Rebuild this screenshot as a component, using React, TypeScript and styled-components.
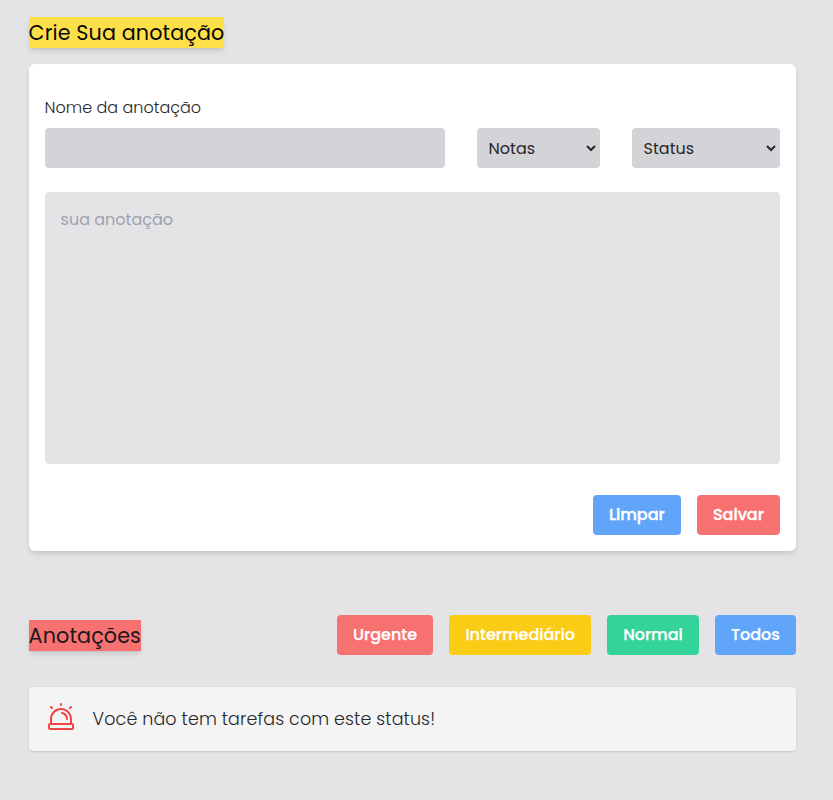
import React from "react";
import styled, { createGlobalStyle } from "styled-components";
import { PiSiren } from "react-icons/pi";

const GlobalStyle = createGlobalStyle`
  *, *::before, *::after { box-sizing: border-box; }
  body {
    margin: 0;
    background: #e4e4e6;
    color: #27272a;
    font-family: Poppins, Inter, "Liberation Sans", sans-serif;
    font-size: 16px;
    line-height: 24px;
  }
  button, input, select, textarea { font: inherit; color: inherit; border: 0; margin: 0; }
`;

const Page = styled.main`
  min-height: 800px;
  padding: 17px 36.8px 49px 28.6px;
`;

const Title = styled.h1<{ $color: string; $ink: string }>`
  width: fit-content;
  height: 31px;
  margin: 0;
  background: ${(p) => p.$color};
  color: ${(p) => p.$ink};
  font-size: 20.7px;
  font-weight: 400;
  line-height: 32px;
  letter-spacing: 0.12px;
  white-space: nowrap;
  box-shadow: 0 4px 6px -1px rgba(0, 0, 0, 0.1), 0 2px 4px -2px rgba(0, 0, 0, 0.1);
`;

const Card = styled.form`
  display: flex;
  flex-direction: column;
  height: 487px;
  margin-top: 16px;
  padding: 32px 16px 16px;
  border-radius: 6px;
  background: #fff;
  box-shadow: 0 4px 6px -1px rgba(0, 0, 0, 0.1), 0 2px 4px -2px rgba(0, 0, 0, 0.1);
`;

const Fields = styled.div`
  display: grid;
  grid-template-columns: 400px 123px 1fr;
  column-gap: 32px;
  align-items: end;
`;

const Field = styled.label`
  display: grid;
  row-gap: 8px;
  font-weight: 300;
`;

const TextInput = styled.input`
  width: 100%;
  height: 40px;
  padding: 8px 12px;
  border-radius: 4px;
  background: #d4d4d8;
`;

const Select = styled.select`
  width: 100%;
  height: 40px;
  padding: 0 8px;
  border-right: 1px solid transparent;
  border-radius: 4px;
  background: #d4d4d8;
  color: #27272a;
`;

const NoteArea = styled.textarea`
  height: 272px;
  margin-top: 24px;
  padding: 16px;
  border-radius: 4px;
  background: #e4e4e6;
  resize: none;
  &::placeholder { color: #9ca3af; opacity: 1; }
`;

const Actions = styled.div`
  display: flex;
  justify-content: flex-end;
  gap: 16px;
  margin-top: 31px;
`;

const Button = styled.button<{ $color: string; $stroke: number }>`
  height: 40px;
  padding: 0 16.35px 0 15.9px;
  border-radius: 4px;
  background: ${(p) => p.$color};
  color: #fff;
  font-weight: 500;
  -webkit-text-stroke: ${(p) => p.$stroke}px #fff;
  white-space: nowrap;
`;

const ListHeader = styled.header`
  display: flex;
  align-items: center;
  justify-content: space-between;
  margin-top: 64px;
`;

const Filters = styled.nav`
  display: flex;
  gap: 16px;
`;

const EmptyNotice = styled.section`
  display: flex;
  align-items: center;
  gap: 16px;
  height: 64px;
  margin-top: 32px;
  padding: 0 16px;
  border-radius: 4px;
  background: #f4f4f4;
  box-shadow: 0 1px 3px rgba(0, 0, 0, 0.1), 0 1px 2px -1px rgba(0, 0, 0, 0.1);
  font-size: 17.5px;
  letter-spacing: 0.1px;
  font-weight: 300;
  svg { color: #ef4444; flex: none; }
`;

const filters = [
  { label: "Urgente", color: "#f87171" },
  { label: "Intermediário", color: "#facc15" },
  { label: "Normal", color: "#34d399" },
  { label: "Todos", color: "#60a5fa" },
];

export default function App() {
  return (
    <>
      <GlobalStyle />
      <Page>
        <Title $color="#fde047" $ink="#09090b">Crie Sua anotação</Title>
        <Card onSubmit={(e) => e.preventDefault()}>
          <Fields>
            <Field>Nome da anotação<TextInput /></Field>
            <Select><option>Notas</option></Select>
            <Select><option>Status</option></Select>
          </Fields>
          <NoteArea placeholder="sua anotação" />
          <Actions>
            <Button type="button" $color="#60a5fa" $stroke={0.4}>Limpar</Button>
            <Button type="submit" $color="#f87171" $stroke={0.4}>Salvar</Button>
          </Actions>
        </Card>
        <ListHeader>
          <Title as="h2" $color="#f87171" $ink="#18181b">Anotações</Title>
          <Filters>
            {filters.map((f) => (
              <Button key={f.label} type="button" $color={f.color} $stroke={0.25}>{f.label}</Button>
            ))}
          </Filters>
        </ListHeader>
        <EmptyNotice><PiSiren size={32} /><span>Você não tem tarefas com este status!</span></EmptyNotice>
      </Page>
    </>
  );
}
